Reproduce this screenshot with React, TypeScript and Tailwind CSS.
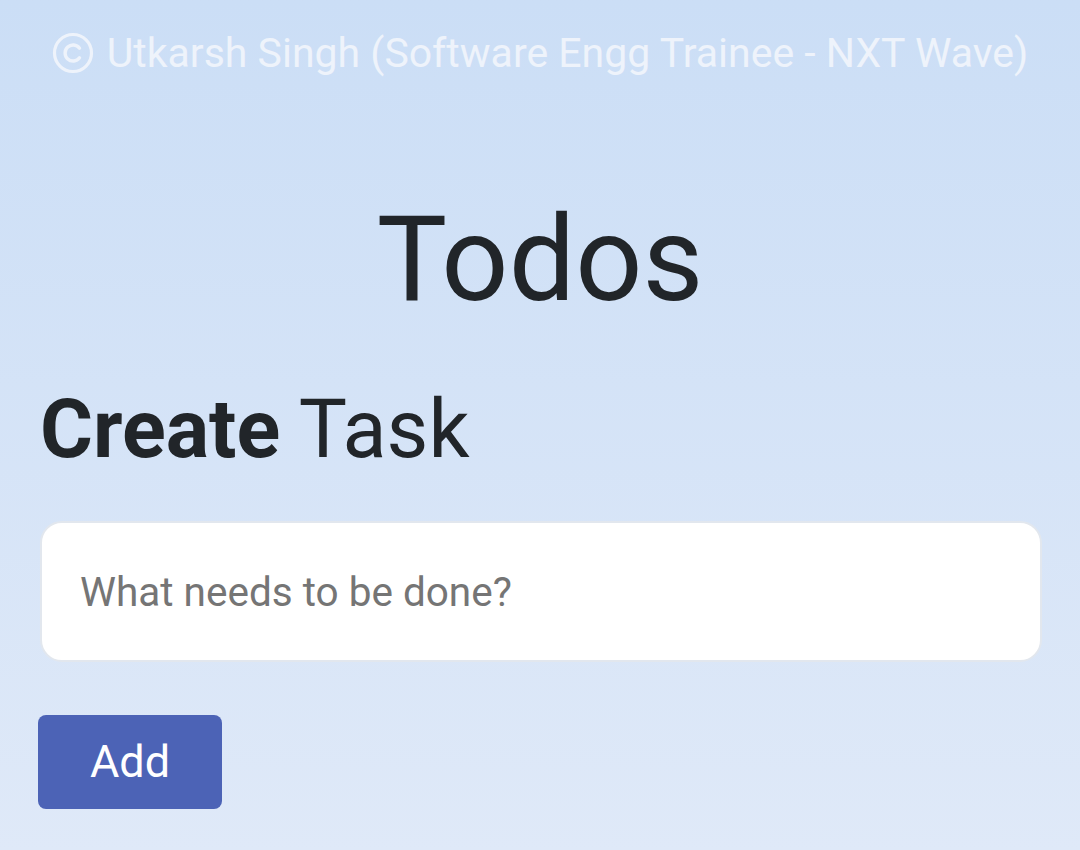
export default function App() {
  return (
    <div
      className="min-h-[850px] w-full bg-gradient-to-b from-[#cbdef6] to-[#dfe9f8] pl-[38px] pr-[38px]"
      style={{ fontFamily: 'Roboto, "Liberation Sans", sans-serif' }}
    >
      <div className="flex items-center justify-center gap-[13px] pt-[26px] text-[#eef3fb]">
        <svg width="42" height="42" viewBox="0 0 42 42" fill="none" aria-hidden="true">
          <circle cx="21" cy="21" r="18.5" stroke="currentColor" strokeWidth="3.2" />
          <path
            d="M27.5 16.2a8 8 0 1 0 0 9.6"
            stroke="currentColor"
            strokeWidth="3.4"
            strokeLinecap="round"
          />
        </svg>
        <p className="text-[41px] leading-[54px]">Utkarsh Singh (Software Engg Trainee - NXT Wave)</p>
      </div>
      <h1 className="mt-[110px] text-center text-[118px] leading-[140px] text-[#212529]">Todos</h1>
      <h2 className="ml-[2px] mt-[52px] text-[81px] leading-[96px] text-[#212529]">
        <span className="font-bold">Create</span> Task
      </h2>
      <input
        type="text"
        placeholder="What needs to be done?"
        className="ml-[2px] mt-[43px] block h-[141px] w-[1002px] rounded-[22px] border-2 border-[#e2e7ee] bg-white px-[38px] text-[40.5px] text-[#212529] outline-none placeholder:text-[#757575]"
      />
      <button className="mt-[53px] block h-[94px] w-[184px] rounded-[8px] bg-[#4c63b6] text-[45px] text-white">
        Add
      </button>
    </div>
  );
}
